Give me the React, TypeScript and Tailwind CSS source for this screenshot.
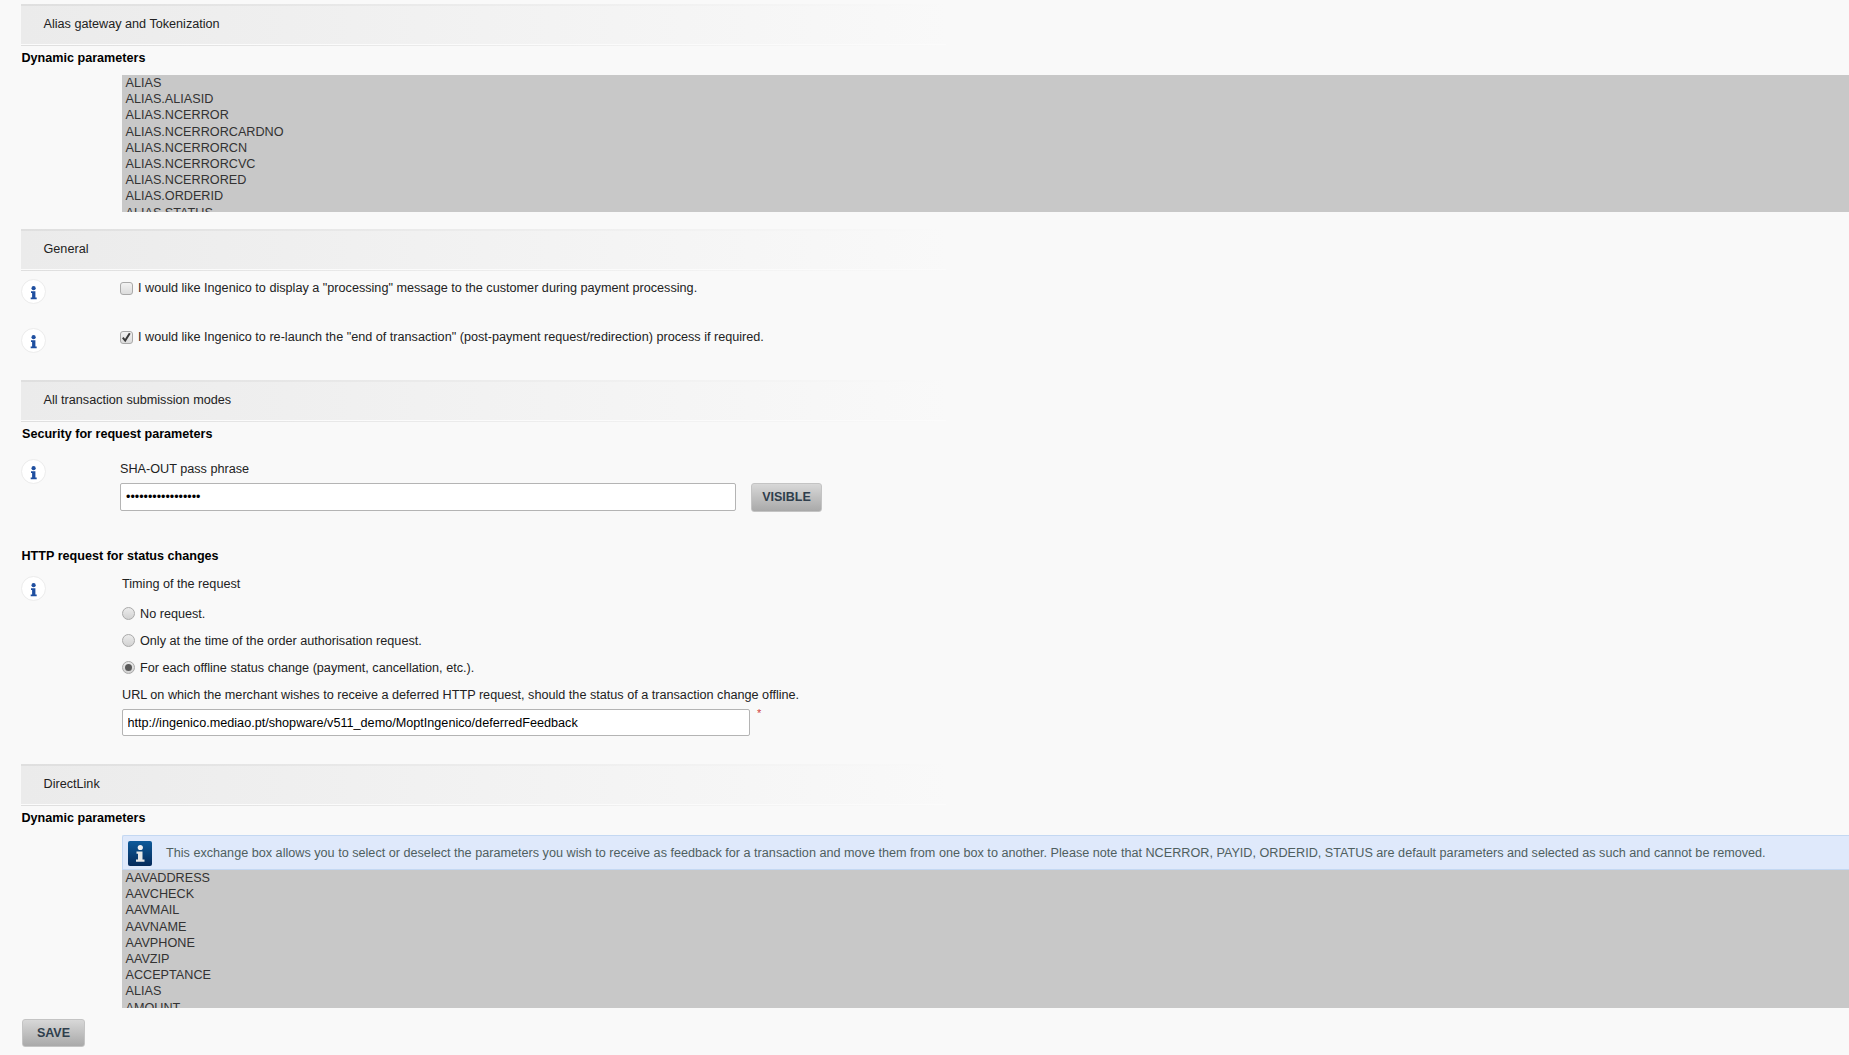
import React from "react";

function SectionHeader({ title, className }: { title: string; className: string }) {
  return (
    <div className={`flex w-[925px] flex-col ${className}`}>
      <div className="h-[2px] bg-linear-to-r from-[#dfdfdf] to-[#f9f9f9]" />
      <div className="flex h-[38px] items-center bg-linear-to-r from-[#ebebeb] to-[#f9f9f9] pb-[2px] pl-[22.5px] text-[12.65px] text-[#222]">
        {title}
      </div>
      <div className="h-[1px] bg-[#fbfbfb]" />
      <div className="h-[1px] bg-linear-to-r from-[#dfdfdf] to-[#f9f9f9]" />
    </div>
  );
}

function InfoBadge({ className = "" }: { className?: string }) {
  return (
    <svg width="25" height="25" viewBox="0 0 25 25" className={`-ml-[1px] shrink-0 ${className}`}>
      <circle cx="12.5" cy="12.5" r="12" fill="#ffffff" stroke="#ebebeb" />
      <circle cx="12.6" cy="9.2" r="2.1" fill="#1f4fa0" />
      <path d="M10 12.2h4.4v6.3h1.3v1.7H9.7v-1.7h1.4v-4.5H10z" fill="#1f4fa0" />
    </svg>
  );
}

function Box({ checked }: { checked?: boolean }) {
  return (
    <span className="flex h-[13px] w-[13px] shrink-0 items-center justify-center rounded-[3px] border border-[#a9a9a9] bg-linear-to-b from-[#f2f2f2] to-[#dcdcdc]">
      {checked && (
        <svg width="11" height="11" viewBox="0 0 11 11">
          <path d="M1.8 5.6l2.4 3 4.6-7.4" fill="none" stroke="#3a3a3a" strokeWidth="2" />
        </svg>
      )}
    </span>
  );
}

function Radio({ label, checked }: { label: string; checked?: boolean }) {
  return (
    <div className="flex h-[16px] items-center">
      <span className="flex h-[13px] w-[13px] shrink-0 items-center justify-center rounded-full border border-[#a9a9a9] bg-linear-to-b from-[#ececec] to-[#d2d2d2]">
        {checked && <span className="h-[7px] w-[7px] rounded-full bg-[#5a5a5a]" />}
      </span>
      <span className="ml-[5px] pt-[2px] text-[12.65px] text-[#222]">{label}</span>
    </div>
  );
}

function ListBox({ items, height }: { items: string[]; height: string }) {
  return (
    <div className={`ml-[122px] overflow-hidden bg-[#c8c8c8] pl-[3.5px] text-[12.65px] leading-[16.2px] text-[#333] ${height}`}>
      {items.map((item) => (
        <div key={item}>{item}</div>
      ))}
    </div>
  );
}

function Btn({ label, className }: { label: string; className: string }) {
  return (
    <button className={`flex items-center justify-center rounded-[3px] border border-[#c4c4c4] bg-linear-to-b from-[#d8d8d8] to-[#a9a9a9] text-[12.5px] font-bold text-[#2f3e4c] ${className}`}>
      {label}
    </button>
  );
}

export default function App() {
  return (
    <div className="h-[1055px] w-[1849px] overflow-hidden bg-[#f9f9f9] pt-[4px] pl-[21px] font-['Liberation_Sans',Arial,sans-serif]">
      <SectionHeader title="Alias gateway and Tokenization" className="" />
      <div className="mt-[4px] h-[16px] pl-[0.5px] text-[12.6px] leading-[16px] font-bold text-black">Dynamic parameters</div>
      <div className="-ml-[21px]">
        <div className="mt-[9px]">
          <ListBox
            height="h-[137px]"
            items={["ALIAS", "ALIAS.ALIASID", "ALIAS.NCERROR", "ALIAS.NCERRORCARDNO", "ALIAS.NCERRORCN", "ALIAS.NCERRORCVC", "ALIAS.NCERRORED", "ALIAS.ORDERID", "ALIAS.STATUS"]}
          />
        </div>
      </div>

      <SectionHeader title="General" className="mt-[17px]" />
      <div className="mt-[8px] flex h-[49px] pl-[1px]">
        <InfoBadge />
        <div className="ml-[74px] flex h-[18px] items-center">
          <Box />
          <span className="ml-[5px] text-[12.65px] text-[#222]">
            I would like Ingenico to display a "processing" message to the customer during payment processing.
          </span>
        </div>
      </div>
      <div className="flex h-[52px] pl-[1px]">
        <InfoBadge />
        <div className="ml-[74px] flex h-[18px] items-center">
          <Box checked />
          <span className="ml-[5px] text-[12.65px] text-[#222]">
            I would like Ingenico to re-launch the "end of transaction" (post-payment request/redirection) process if required.
          </span>
        </div>
      </div>

      <SectionHeader title="All transaction submission modes" className="" />
      <div className="mt-[4px] h-[16px] pl-[1px] text-[12.6px] leading-[16px] font-bold text-black">Security for request parameters</div>
      <div className="mt-[17px] flex pl-[1px]">
        <InfoBadge />
        <div className="ml-[74px]">
          <div className="mt-[2px] h-[16px] text-[12.65px] leading-[16px] text-[#222]">SHA-OUT pass phrase</div>
          <div className="mt-[6px] flex items-start">
            <input
              type="password"
              readOnly
              value="aaaaaaaaaaaaaaaaa"
              className="h-[28px] w-[616px] rounded-[2px] border border-[#b4b4b4] bg-white pl-[5px] text-[12.5px] text-black outline-none"
            />
            <Btn label="VISIBLE" className="ml-[15px] h-[29px] w-[71px]" />
          </div>
        </div>
      </div>

      <div className="mt-[36px] h-[16px] pl-[0.5px] text-[12.6px] leading-[16px] font-bold text-black">HTTP request for status changes</div>
      <div className="mt-[12px] flex pl-[1px]">
        <InfoBadge />
        <div className="ml-[76px]">
          <div className="h-[16px] text-[12.65px] leading-[16px] text-[#222]">Timing of the request</div>
          <div className="mt-[13px]"><Radio label="No request." /></div>
          <div className="mt-[11px]"><Radio label="Only at the time of the order authorisation request." /></div>
          <div className="mt-[11px]"><Radio label="For each offline status change (payment, cancellation, etc.)." checked /></div>
          <div className="mt-[12px] h-[16px] text-[12.65px] leading-[16px] text-[#222]">
            URL on which the merchant wishes to receive a deferred HTTP request, should the status of a transaction change offline.
          </div>
          <div className="mt-[6px] flex items-start">
            <input
              type="text"
              readOnly
              value="http://ingenico.mediao.pt/shopware/v511_demo/MoptIngenico/deferredFeedback"
              className="h-[27px] w-[628px] rounded-[2px] border border-[#b4b4b4] bg-white pl-[4.5px] text-[12.65px] text-black outline-none"
            />
            <span className="ml-[7px] text-[11px] leading-[9px] text-[#d04040]">*</span>
          </div>
        </div>
      </div>

      <SectionHeader title="DirectLink" className="mt-[28px]" />
      <div className="mt-[4px] h-[16px] pl-[0.5px] text-[12.6px] leading-[16px] font-bold text-black">Dynamic parameters</div>
      <div className="-ml-[21px] mt-[9px]">
        <div className="ml-[122px] flex h-[35px] items-center rounded-tl-[2px] border border-r-0 border-[#c4d8f2] bg-[#dfe9fb] pt-[1px] pl-[5px] text-[12.65px] text-[#4f5f5f]">
          <svg width="24" height="25" viewBox="0 0 24 25" className="shrink-0">
            <defs>
              <linearGradient id="infoFill" x1="0" y1="0" x2="0" y2="1">
                <stop offset="0" stopColor="#0d5a9a" />
                <stop offset="1" stopColor="#052a5a" />
              </linearGradient>
            </defs>
            <rect width="24" height="25" rx="2" fill="url(#infoFill)" />
            <circle cx="12.3" cy="6.5" r="2.6" fill="#f2f2f2" />
            <path d="M8.5 10.5h6v8h2v2.2H8v-2.2h2v-5.7H8.5z" fill="#e8e8e8" />
          </svg>
          <span className="ml-[14px]">
            This exchange box allows you to select or deselect the parameters you wish to receive as feedback for a transaction and move them from one box to another. Please note that NCERROR, PAYID, ORDERID, STATUS are default parameters and selected as such and cannot be removed.
          </span>
        </div>
        <ListBox
          height="h-[138px]"
          items={["AAVADDRESS", "AAVCHECK", "AAVMAIL", "AAVNAME", "AAVPHONE", "AAVZIP", "ACCEPTANCE", "ALIAS", "AMOUNT"]}
        />
      </div>
      <Btn label="SAVE" className="mt-[11px] ml-[1px] h-[28px] w-[63px]" />
    </div>
  );
}
